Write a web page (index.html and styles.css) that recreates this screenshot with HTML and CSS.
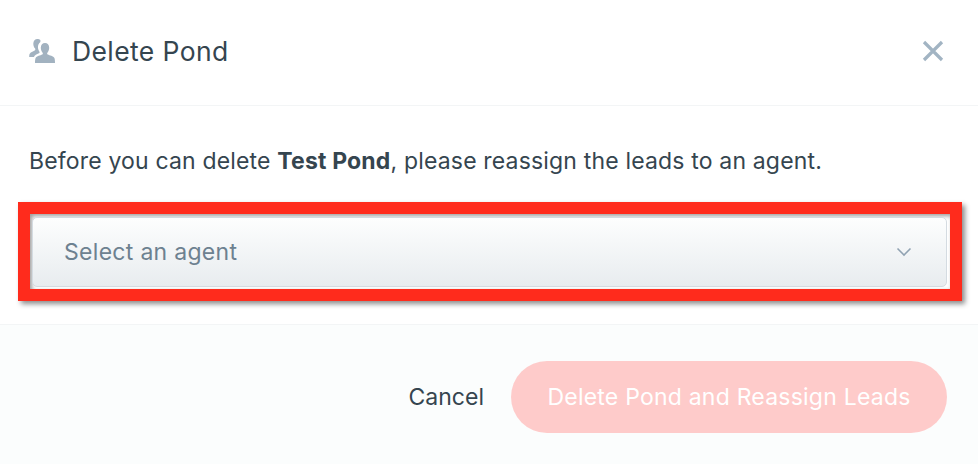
FILE: index.html
```html
<!DOCTYPE html>
<html lang="en">
<head>
<meta charset="utf-8">
<title>Delete Pond</title>
<link rel="stylesheet" href="styles.css">
</head>
<body>
<div class="modal">
  <header class="header">
    <svg class="pond-icon" viewBox="0 0 26 24" aria-hidden="true">
      <path fill="#a2b2c0" d="M8.500 0C6 0 4.300 2 4.300 4.700c0 2 .8 3.700 1.800 4.900.5.600.3 1.400-.4 1.800C4 12.300 1.500 13 .6 15c-.3.700-.4 2-.4 3h4.700c.8-1.800 2.700-2.800 5-3.800.8-.4.900-1 .4-1.800-1-1.500-1.500-3.200-1.300-5 .2-2 1-3.300 2.200-4.200C12.300 1.200 10.600 0 8.500 0z"/>
      <path fill="#a2b2c0" d="M16 4c-2.500 0-4.200 2-4.200 4.700 0 2 .8 3.800 1.800 5 .5.600.3 1.400-.4 1.800-1.700.9-5.600 1.600-6.600 3.500-.5 1-.6 3-.6 5h20c0-2-.1-4-.6-5-1-1.900-4.900-2.600-6.600-3.500-.7-.4-.9-1.200-.4-1.800 1-1.200 1.800-3 1.800-5C20.200 6 18.500 4 16 4z"/>
    </svg>
    <h1 class="title">Delete Pond</h1>
    <svg class="close-icon" viewBox="0 0 22 22" aria-hidden="true">
      <path d="M2 2l18 18M20 2L2 20" fill="none" stroke="#a2b4c3" stroke-width="3.200"/>
    </svg>
  </header>
  <main class="content">
    <p class="message">Before you can delete <strong>Test Pond</strong>, please reassign the leads to an agent.</p>
    <div class="highlight">
      <div class="select">
        <span class="select-label">Select an agent</span>
        <svg class="chevron" viewBox="0 0 16 10" aria-hidden="true">
          <path d="M1.500 1.500L8 8l6.500-6.500" fill="none" stroke="#90a2b2" stroke-width="1.600"/>
        </svg>
      </div>
    </div>
  </main>
  <footer class="footer">
    <span class="cancel">Cancel</span>
    <span class="submit">Delete Pond and Reassign Leads</span>
  </footer>
</div>
</body>
</html>
```
FILE: styles.css
```css
* { box-sizing: border-box; }
html, body { margin: 0; padding: 0; }
body {
  width: 978px;
  height: 464px;
  overflow: hidden;
  background: #fff;
  font-family: "Inter", "Liberation Sans", sans-serif;
  color: #35454f;
}
.modal { display: flex; flex-direction: column; height: 464px; }
.header {
  height: 106px;
  flex: none;
  display: flex;
  align-items: center;
  padding: 0 34px 3px 29px;
  border-bottom: 1px solid #f3f5f6;
}
.pond-icon { width: 26px; height: 24px; margin-right: 17px; }
.title { margin: 0; flex: 1; font-size: 26.500px; letter-spacing: .4px; font-weight: 400; color: #35454f; }
.close-icon { width: 22px; height: 22px; }
.content { height: 219px; flex: none; padding: 42px 16px 0 18px; border-bottom: 1px solid #f3f5f6; }
.message { margin: 0 0 0 11px; font-size: 23px; letter-spacing: .17px; line-height: 26px; }
.message strong { font-weight: 700; }
.highlight {
  margin-top: 28px;
  height: 99px;
  border: 12px solid #ff2b1c;
  box-shadow: 3px 3px 5px rgba(0, 0, 0, .45), inset 2px 2px 4px rgba(0, 0, 0, .4);
  padding: 3px 3px 2px 2px;
  background: #fff;
}
.select {
  height: 100%;
  display: flex;
  align-items: center;
  justify-content: space-between;
  padding: 0 34px 0 31px;
  border: 1px solid #d4dbe1;
  border-radius: 5px;
  background: linear-gradient(#fdfefe, #e8ecef);
}
.select-label { font-size: 23px; letter-spacing: .3px; color: #6d8190; }
.chevron { width: 16px; height: 10px; }
.footer {
  flex: 1;
  display: flex;
  align-items: center;
  justify-content: flex-end;
  gap: 27px;
  padding: 4px 31px 0 0;
  background: #fbfdfd;
}
.cancel { font-size: 23px; color: #35454f; }
.submit {
  width: 436px;
  height: 72px;
  display: flex;
  align-items: center;
  justify-content: center;
  border-radius: 36px;
  background: #fecbca;
  color: #fff;
  font-size: 23px;
  letter-spacing: .22px;
}
```
